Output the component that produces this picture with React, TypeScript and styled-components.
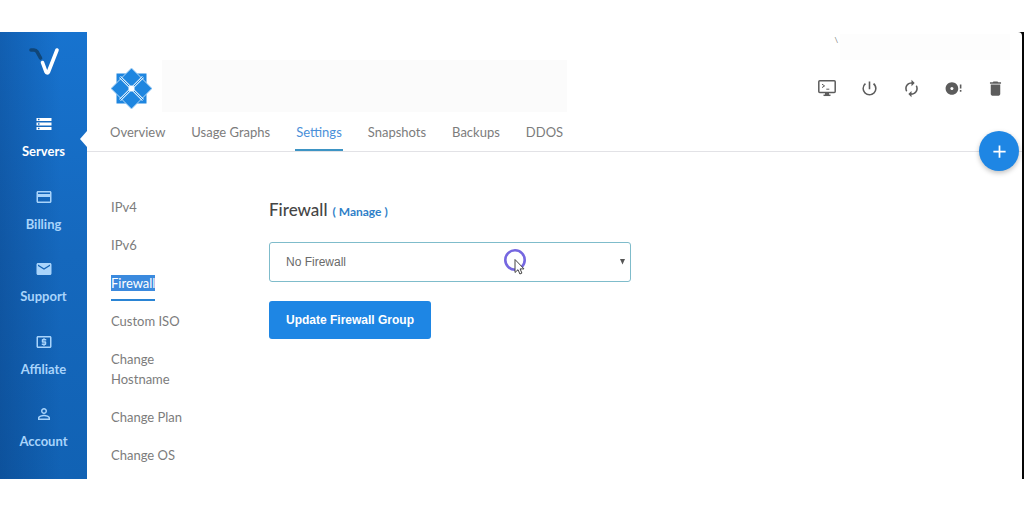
import React from "react";
import styled, { createGlobalStyle, css } from "styled-components";
import type { IconType } from "react-icons";
import {
  MdAdd,
  MdAutorenew,
  MdCreditCard,
  MdDelete,
  MdDiscFull,
  MdLocalAtm,
  MdMail,
  MdPersonOutline,
  MdPowerSettingsNew,
  MdStorage,
} from "react-icons/md";

const GlobalStyle = createGlobalStyle`
  *, *::before, *::after { box-sizing: border-box; }
  body {
    margin: 0;
    background: #fff;
    color: #747474;
    font-family: Lato, "Open Sans", sans-serif;
    font-size: 13px;
    line-height: 20px;
  }
`;

const Frame = styled.div`
  display: flex;
  margin: 32px 0;
  padding-right: 2px;
  background: #050505;
`;

const Sidebar = styled.nav`
  flex: none;
  width: 87px;
  display: flex;
  flex-direction: column;
  align-items: stretch;
  justify-content: space-between;
  gap: 26px;
  padding: 14px 0 28px;
  background:
    linear-gradient(90deg, rgba(0, 30, 80, 0.24), rgba(0, 30, 80, 0) 70%),
    linear-gradient(180deg, #1773cf 0%, #1568bd 50%, #1162b4 100%);
`;

const Brand = styled.a`
  display: flex;
  justify-content: center;
  height: 43px;
`;

const NavItem = styled.a<{ $active?: boolean }>`
  position: relative;
  display: flex;
  flex-direction: column;
  align-items: center;
  gap: 8px;
  color: #a9d4fb;
  font-weight: 700;
  line-height: 20px;
  text-decoration: none;

  ${({ $active }) =>
    $active &&
    css`
      color: #fff;

      &::after {
        content: "";
        position: absolute;
        right: 0;
        top: 16px;
        border: 8px solid transparent;
        border-left-width: 0;
        border-right: 7px solid #fff;
      }
    `}
`;

const Main = styled.main`
  flex: 1;
  min-width: 0;
  background: #fff;
  border-top-right-radius: 4px;
`;

const Header = styled.header`
  position: relative;
  border-bottom: 1px solid #e2e2e6;
`;

const AccountBar = styled.div`
  display: flex;
  justify-content: flex-end;
  gap: 2px;
  height: 28px;
  padding: 2px 12px 0 0;
  font-size: 8px;
  line-height: 12px;
`;

const AccountName = styled.div`
  width: 170px;
  height: 26px;
  background: #fdfdfd;
`;

const TitleRow = styled.div`
  display: flex;
  align-items: center;
  padding: 0 17px 0 24px;
`;

const ServerName = styled.div`
  flex: 0 1 405px;
  height: 52px;
  margin: 0 0 4px 10px;
  background: #fbfbfb;
`;

const Actions = styled.div`
  display: flex;
  gap: 22px;
  margin-left: auto;
`;

const ActionButton = styled.button`
  display: flex;
  align-items: center;
  justify-content: center;
  width: 20px;
  height: 20px;
  padding: 0;
  border: 0;
  background: none;
  color: #5c5c5c;

  svg {
    flex: none;
  }
`;

const Tabs = styled.nav`
  display: flex;
  gap: 24px;
  padding: 6px 22px 0;
`;

const Tab = styled.a<{ $active?: boolean }>`
  padding: 0 1px 7px;
  border-bottom: 2px solid ${({ $active }) => ($active ? "#3d94c4" : "transparent")};
  color: ${({ $active }) => ($active ? "#4a90d9" : "#7c7c7c")};
  text-decoration: none;
`;

const AddButton = styled.button`
  position: absolute;
  right: 3px;
  bottom: -20px;
  display: flex;
  align-items: center;
  justify-content: center;
  width: 40px;
  height: 40px;
  padding: 0;
  border: 0;
  border-radius: 50%;
  background: #1e86e4;
  color: #fff;
  box-shadow: 0 2px 5px rgba(0, 0, 0, 0.25);
`;

const Body = styled.div`
  display: flex;
  gap: 64px;
  padding: 45px 24px 14px;
`;

const SubNav = styled.nav`
  flex: none;
  display: flex;
  flex-direction: column;
  align-items: flex-start;
  gap: 18px;
  width: 94px;
`;

const SubLink = styled.a<{ $active?: boolean }>`
  position: relative;
  color: #7c7c7c;
  text-decoration: none;

  ${({ $active }) =>
    $active &&
    css`
      color: #fff;

      &::after {
        content: "";
        position: absolute;
        left: 0;
        right: 0;
        bottom: -8px;
        height: 2px;
        background: #2a84d4;
      }
    `}
`;

const Selected = styled.span`
  background: #3b8ade;
`;

const Panel = styled.section`
  flex: 0 1 362px;
  min-width: 0;
`;

const Heading = styled.div`
  display: flex;
  align-items: baseline;
  gap: 5px;
  margin: 3px 0 20px;
`;

const Title = styled.label`
  color: #454545;
  font-size: 17px;
  font-weight: 500;
`;

const Manage = styled.a`
  color: #2f7fc8;
  font-size: 12px;
  font-weight: 700;
  text-decoration: none;
`;

const SelectBox = styled.div`
  position: relative;
  margin-bottom: 19px;
`;

const Select = styled.select`
  display: block;
  width: 100%;
  height: 40px;
  padding: 0 16px;
  appearance: none;
  border: 1px solid #7fbccb;
  border-radius: 3px;
  outline: 0;
  background: #fff;
  color: #6a6a6a;
  font-family: "Liberation Sans", Arial, sans-serif;
  font-size: 12px;
`;

const Caret = styled.svg`
  position: absolute;
  right: 6px;
  top: 17px;
  pointer-events: none;
`;

const Pointer = styled.svg`
  position: absolute;
  left: 234px;
  top: 6px;
  pointer-events: none;
`;

const SubmitButton = styled.button`
  height: 38px;
  padding: 0 17px;
  border: 0;
  border-radius: 3px;
  background: #1e86e4;
  color: #fff;
  font-family: "Liberation Sans", Arial, sans-serif;
  font-size: 12px;
  font-weight: 700;
`;

const navItems: { label: string; Icon: IconType }[] = [
  { label: "Servers", Icon: MdStorage },
  { label: "Billing", Icon: MdCreditCard },
  { label: "Support", Icon: MdMail },
  { label: "Affiliate", Icon: MdLocalAtm },
  { label: "Account", Icon: MdPersonOutline },
];

const tabs = ["Overview", "Usage Graphs", "Settings", "Snapshots", "Backups", "DDOS"];

const subLinks = [
  "IPv4",
  "IPv6",
  "Firewall",
  "Custom ISO",
  "Change Hostname",
  "Change Plan",
  "Change OS",
];

const actions: { label: string; Icon: IconType }[] = [
  { label: "Stop server", Icon: MdPowerSettingsNew },
  { label: "Restart server", Icon: MdAutorenew },
  { label: "Reinstall server", Icon: MdDiscFull },
  { label: "Destroy server", Icon: MdDelete },
];

function BrandMark() {
  return (
    <svg width="32" height="31" viewBox="0 0 32 31" fill="none" aria-hidden="true">
      <path d="M3 4h3c1.500 0 2.300.500 3 1.700l3.500 6.300" stroke="#104678" strokeWidth="3.600" strokeLinecap="round" />
      <path d="M14.500 16.500l3.500 9.500c.500 1.300 1.900 1.300 2.400 0L29 4" stroke="#fff" strokeWidth="3.600" strokeLinecap="round" strokeLinejoin="round" />
    </svg>
  );
}

function ServerLogo() {
  return (
    <svg width="41" height="41" viewBox="0 0 41 41" aria-hidden="true">
      <rect x="5.500" y="5.500" width="30" height="30" fill="#1e86e0" />
      <g fill="#1e86e0" stroke="#b5d8f6" strokeWidth="1">
        <path d="M20.500 0L31 10.500 20.500 21 10 10.500z" />
        <path d="M20.500 20L31 30.500 20.500 41 10 30.500z" />
        <path d="M10.500 10L21 20.500 10.500 31 0 20.500z" />
        <path d="M30.500 10L41 20.500 30.500 31 20 20.500z" />
      </g>
      <path d="M9 9l23 23M32 9L9 32" stroke="#d4e9fa" strokeWidth="2.600" />
      <path d="M9 9l23 23M32 9L9 32" stroke="#1e86e0" strokeWidth="1" />
      <circle cx="20.500" cy="20.500" r="3" fill="#fff" />
    </svg>
  );
}

function ConsoleIcon() {
  return (
    <svg width="20" height="18" viewBox="0 0 20 18" fill="none" stroke="currentColor" aria-hidden="true">
      <rect x="1.800" y="1.800" width="16.400" height="11.800" rx="1" strokeWidth="1.500" />
      <path d="M5 5.200l2.600 1.700L5 8.600M9.300 10.200h3" strokeWidth="1" />
      <path d="M10 13.500v2.500" strokeWidth="4" />
      <path d="M6.500 16.300h7" strokeWidth="1.500" />
    </svg>
  );
}

export default function App() {
  return (
    <>
      <GlobalStyle />
      <Frame>
        <Sidebar aria-label="Main">
          <Brand href="#" aria-label="Home">
            <BrandMark />
          </Brand>
          {navItems.map(({ label, Icon }, i) => (
            <NavItem key={label} href="#" $active={i === 0}>
              <Icon size={18} />
              {label}
            </NavItem>
          ))}
        </Sidebar>
        <Main>
          <Header>
            <AccountBar>
              <span>\</span>
              <AccountName />
            </AccountBar>
            <TitleRow>
              <ServerLogo />
              <ServerName />
              <Actions>
                <ActionButton aria-label="View console">
                  <ConsoleIcon />
                </ActionButton>
                {actions.map(({ label, Icon }) => (
                  <ActionButton key={label} aria-label={label}>
                    <Icon size={19} />
                  </ActionButton>
                ))}
              </Actions>
            </TitleRow>
            <Tabs aria-label="Server">
              {tabs.map((tab) => (
                <Tab key={tab} href="#" $active={tab === "Settings"}>
                  {tab}
                </Tab>
              ))}
            </Tabs>
            <AddButton aria-label="Deploy new server">
              <MdAdd size={21} />
            </AddButton>
          </Header>
          <Body>
            <SubNav aria-label="Settings">
              {subLinks.map((link) =>
                link === "Firewall" ? (
                  <SubLink key={link} href="#" $active>
                    <Selected>{link}</Selected>
                  </SubLink>
                ) : (
                  <SubLink key={link} href="#">
                    {link}
                  </SubLink>
                ),
              )}
            </SubNav>
            <Panel>
              <Heading>
                <Title htmlFor="firewall-group">Firewall</Title>
                <Manage href="#">( Manage )</Manage>
              </Heading>
              <SelectBox>
                <Select id="firewall-group" defaultValue="none">
                  <option value="none">No Firewall</option>
                </Select>
                <Caret width="5" height="6" viewBox="0 0 5 6" aria-hidden="true">
                  <path d="M0 0h5L2.500 5.500z" fill="#555" />
                </Caret>
                <Pointer width="24" height="28" viewBox="0 0 24 28" aria-hidden="true">
                  <circle cx="12" cy="12" r="9.700" fill="none" stroke="#7567e0" strokeWidth="2.600" />
                  <path
                    d="M12 11.500v13l3-2.800 1.900 4.300 2-.9-1.800-4.200h3.900z"
                    fill="#fff"
                    stroke="#444"
                    strokeWidth="1"
                  />
                </Pointer>
              </SelectBox>
              <SubmitButton type="button">Update Firewall Group</SubmitButton>
            </Panel>
          </Body>
        </Main>
      </Frame>
    </>
  );
}
